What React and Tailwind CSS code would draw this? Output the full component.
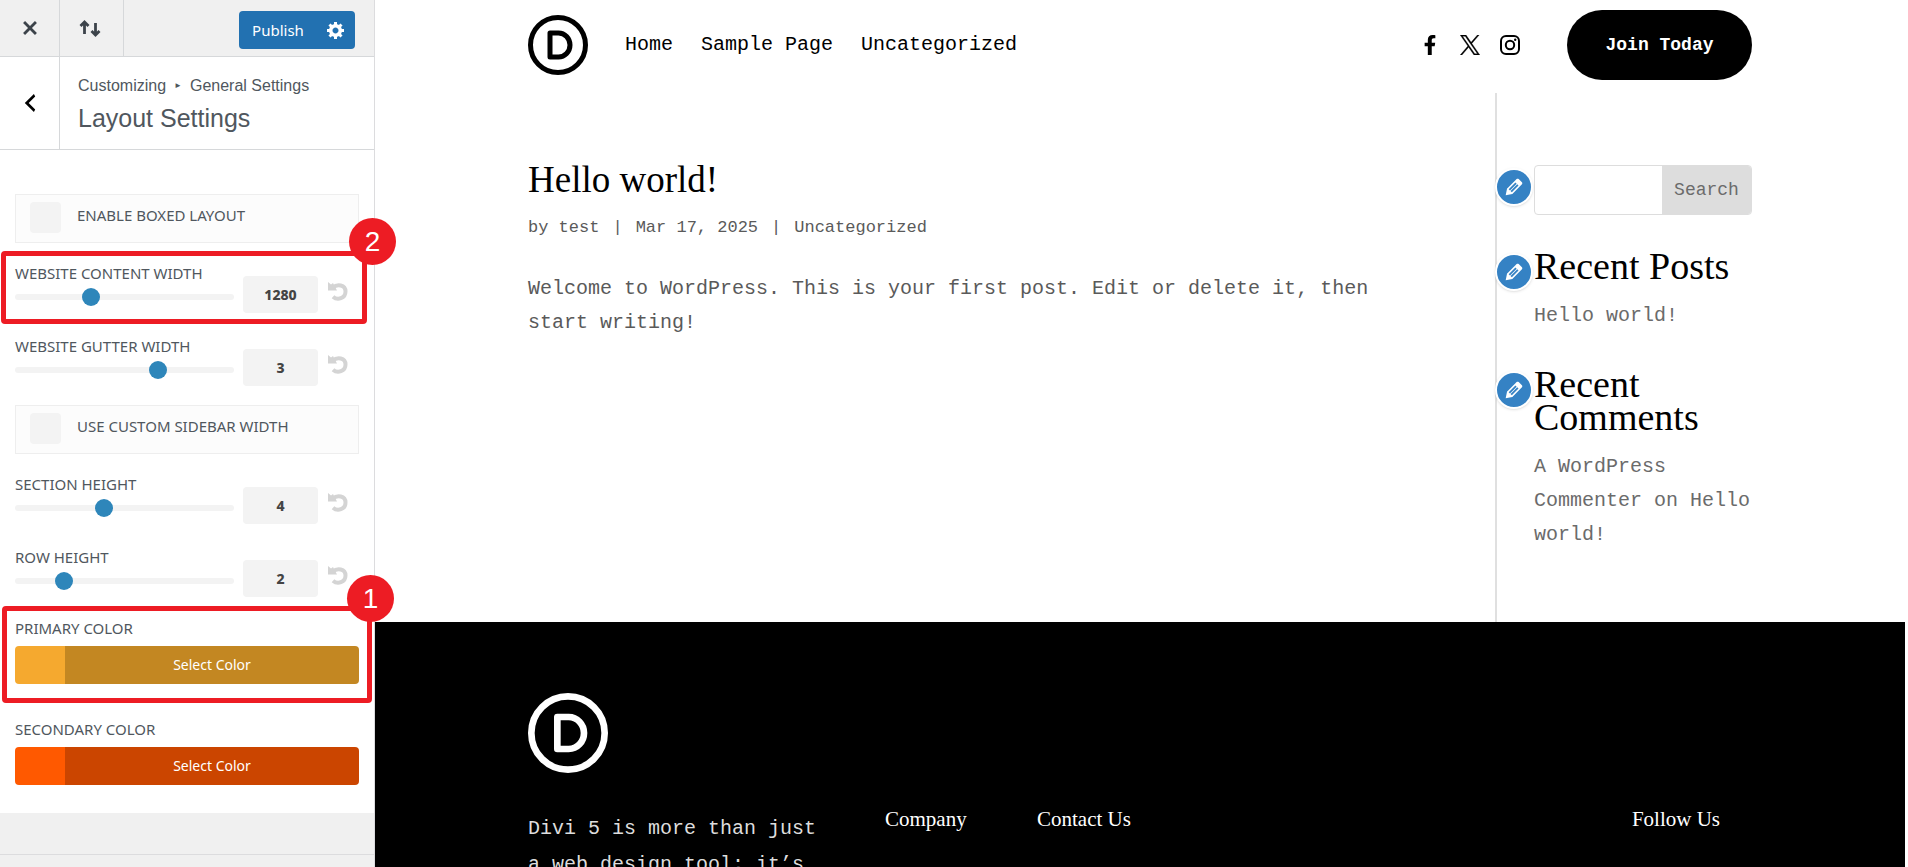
import { useState } from 'react'
import { FaFacebookF } from 'react-icons/fa'

const FORM_FONT = "font-['Noto_Sans','Open_Sans',sans-serif]"
const MONO_FONT = "font-['Liberation_Mono',monospace]"
const SERIF_FONT = "font-['Liberation_Serif',serif]"

function Dashicon({ d, className }) {
  return (
    <svg viewBox="0 0 20 20" fill="currentColor" className={className} aria-hidden="true">
      <path d={d} />
    </svg>
  )
}

const ICONS = {
  close: 'M14.95 6.46L11.41 10l3.54 3.54-1.41 1.41L10 11.42l-3.53 3.53-1.42-1.42L8.58 10 5.05 6.47l1.42-1.42L10 8.58l3.54-3.53z',
  back: 'M14 5l-5 5 5 5-1 2-7-7 7-7z',
  gear: 'M18 12h-2.18c-.17.7-.44 1.35-.81 1.93l1.54 1.54-2.1 2.1-1.54-1.54c-.58.36-1.23.63-1.91.79V19H8v-2.18c-.68-.16-1.33-.43-1.91-.79l-1.54 1.54-2.12-2.12 1.54-1.54c-.36-.58-.63-1.23-.79-1.91H1V9.03h2.17c.16-.7.44-1.35.8-1.94L2.43 5.55l2.1-2.1 1.54 1.54c.58-.37 1.24-.64 1.93-.81V2h3v2.18c.68.16 1.33.43 1.91.79l1.54-1.54 2.12 2.12-1.54 1.54c.36.59.64 1.24.8 1.94H18V12zm-8.5 1.5c1.66 0 3-1.34 3-3s-1.34-3-3-3-3 1.34-3 3 1.34 3 3 3z',
  edit: 'M13.89 3.39l2.71 2.72c.46.46.42 1.24.03 1.64l-8.01 8.02-5.56 1.16 1.16-5.58s7.6-7.63 7.99-8.03c.39-.39 1.22-.39 1.68.07zm-2.73 2.79l-5.59 5.61 1.11 1.11 5.54-5.65zm-2.97 8.23l5.58-5.6-1.07-1.08-5.59 5.6z',
}

function SortIcon() {
  return (
    <svg viewBox="0 0 22 18" className="w-[22px] h-[18px] mr-[3px]" fill="none" stroke="currentColor" strokeWidth="2.8" aria-hidden="true">
      <path d="M5.5 15V3M1.5 7l4-4 4 4M16.5 4v12M12.5 12l4 4 4-4" />
    </svg>
  )
}

function ResetIcon() {
  return (
    <svg viewBox="0 0 20 19" className="w-5 h-[19px]" aria-hidden="true">
      <path d="M5 5.500C9 1.800 17.500 2.500 17.500 9.500c0 7-8 9.200-12.500 5.200" fill="none" stroke="currentColor" strokeWidth="4" />
      <path d="M0 0l3 2.500L5 1l4 7.500H0z" fill="currentColor" />
    </svg>
  )
}

function DiviLogo({ className }) {
  return (
    <svg viewBox="0 0 60 60" className={className} fill="none" stroke="currentColor" role="img" aria-label="Divi">
      <circle cx="30" cy="30" r="27.500" strokeWidth="5" />
      <path d="M22 18h8.500a11.500 12 0 0 1 0 24H22z" strokeWidth="5" strokeLinejoin="round" />
    </svg>
  )
}

function Badge({ className, children }) {
  return (
    <span className={`absolute z-20 flex items-center justify-center w-[47px] h-[47px] rounded-full bg-[#ed1c24] text-white text-[28px] leading-none font-['Liberation_Sans',sans-serif] ${className}`}>
      {children}
    </span>
  )
}

function CheckRow({ id, label }) {
  return (
    <div className="flex items-start h-[49px] pt-[7px] pl-[14px] border border-[#eeeeee] bg-[#fcfcfc]">
      <input id={id} type="checkbox" className="appearance-none w-[31px] h-[31px] rounded bg-[#f3f3f3] checked:bg-[#2e86ba]" />
      <label htmlFor={id} className="ml-4 mt-[3px] text-[15px] leading-5 uppercase">{label}</label>
    </div>
  )
}

function SliderRow({ id, label, min, max, initial, children }) {
  const [value, setValue] = useState(initial)

  return (
    <div className="relative flex">
      <div className="flex-1 flex flex-col pt-px">
        <label htmlFor={id} className="text-[15px] leading-5 uppercase">{label}</label>
        <input
          id={id}
          type="range"
          min={min}
          max={max}
          value={value}
          onChange={(e) => setValue(Number(e.target.value))}
          className="appearance-none w-full h-[18px] mt-[5px] bg-transparent [&::-webkit-slider-runnable-track]:h-[6px] [&::-webkit-slider-runnable-track]:rounded-full [&::-webkit-slider-runnable-track]:bg-[#f3f3f3] [&::-webkit-slider-thumb]:appearance-none [&::-webkit-slider-thumb]:-mt-[6px] [&::-webkit-slider-thumb]:w-[18px] [&::-webkit-slider-thumb]:h-[18px] [&::-webkit-slider-thumb]:rounded-full [&::-webkit-slider-thumb]:bg-[#2e86ba]"
        />
      </div>
      <input
        type="text"
        aria-label={`${label} value`}
        value={value}
        onChange={(e) => setValue(Number(e.target.value) || 0)}
        className="w-[75px] h-[37px] ml-[9px] mt-[14px] rounded bg-[#f3f3f3] text-center text-sm font-extrabold text-[#444444]"
      />
      <button type="button" aria-label={`Reset ${label}`} onClick={() => setValue(initial)} className="ml-[10px] mr-[11px] mt-[20px] self-start text-[#d4d4d4]">
        <ResetIcon />
      </button>
      {children}
    </div>
  )
}

function ColorRow({ label, swatch, bar, children }) {
  return (
    <div className="relative">
      <div className="text-[15px] leading-5 uppercase pt-[2px]">{label}</div>
      <button type="button" aria-label={`${label}: Select Color`} className="flex w-full h-[38px] mt-2 rounded overflow-hidden text-sm text-white">
        <span className={`w-[50px] h-full ${swatch}`} />
        <span className={`flex-1 h-full flex items-center justify-center ${bar}`}>Select Color</span>
      </button>
      {children}
    </div>
  )
}

function Customizer() {
  return (
    <aside className={`relative z-10 flex flex-col w-[375px] shrink-0 border-r border-[#dcdcde] bg-[#f0f0f0] text-[#50575e] ${FORM_FONT}`}>
      <div className="flex h-[57px] shrink-0 border-b border-[#d6d8da]">
        <button type="button" aria-label="Close" className="flex items-center justify-center w-[60px] border-r border-[#d6d8da] text-[#3c434a]">
          <Dashicon d={ICONS.close} className="w-7 h-7" />
        </button>
        <button type="button" aria-label="Reorder" className="flex items-center justify-center w-16 border-r border-[#d6d8da] text-[#3c434a]">
          <SortIcon />
        </button>
        <div className="flex ml-auto mr-[19px] mt-[11px] h-[38px] rounded overflow-hidden bg-[#2271b1] text-white">
          <button type="button" className="w-[78px] text-[15px]">Publish</button>
          <button type="button" aria-label="Publish settings" className="flex items-center justify-center w-[38px]">
            <Dashicon d={ICONS.gear} className="w-5 h-5" />
          </button>
        </div>
      </div>

      <div className="flex h-[93px] shrink-0 border-b border-[#d6d8da] bg-white font-['Liberation_Sans',sans-serif]">
        <button type="button" aria-label="Back" className="flex items-center justify-center w-[60px] shrink-0 border-r border-[#d6d8da] text-black">
          <Dashicon d={ICONS.back} className="w-[26px] h-[26px]" />
        </button>
        <div className="pl-[18px] pt-[19px]">
          <div className="flex items-center text-base leading-5">
            <span>Customizing</span>
            <span className="mx-2 text-[8px]">►</span>
            <span>General Settings</span>
          </div>
          <h3 className="mt-[6px] text-[25px] leading-8">Layout Settings</h3>
        </div>
      </div>

      <form className="flex flex-col gap-[19px] pl-[15px] pr-[15px] pt-11 pb-7 bg-white">
        <CheckRow id="boxed" label="Enable Boxed Layout" />
        <div className="flex flex-col gap-[22px]">
          <SliderRow id="content-width" label="Website Content Width" min={960} max={1920} initial={1280}>
            <div className="absolute -left-[14px] -right-[8px] -top-[11px] -bottom-[11px] rounded border-5 border-[#ed1c24] pointer-events-none" />
            <Badge className="-right-[37px] -top-[44px]">2</Badge>
          </SliderRow>
          <SliderRow id="gutter-width" label="Website Gutter Width" min={1} max={4} initial={3} />
        </div>
        <CheckRow id="custom-sidebar" label="Use Custom Sidebar Width" />
        <div className="flex flex-col gap-[22px]">
          <SliderRow id="section-height" label="Section Height" min={0} max={10} initial={4} />
          <SliderRow id="row-height" label="Row Height" min={0} max={10} initial={2} />
        </div>
        <ColorRow label="Primary Color" swatch="bg-[#f5a92f]" bar="bg-[#c38722]">
          <div className="absolute -left-[13px] -right-[13px] -top-[10px] -bottom-[19px] rounded border-5 border-[#ed1c24] pointer-events-none" />
          <Badge className="-right-[35px] -top-[41px]">1</Badge>
        </ColorRow>
        <div className="mt-[14px]">
          <ColorRow label="Secondary Color" swatch="bg-[#ff5900]" bar="bg-[#cb4500]" />
        </div>
      </form>
      <div className="mt-auto h-[13px] shrink-0 border-t border-[#dcdcde]" />
    </aside>
  )
}

function SiteHeader() {
  return (
    <header className="flex items-center w-4/5 mx-auto h-[90px] shrink-0 text-black">
      <a href="#home" aria-label="Home">
        <DiviLogo className="w-[60px] h-[60px]" />
      </a>
      <nav className="flex gap-7 ml-[37px] text-xl">
        <a href="#home">Home</a>
        <a href="#sample">Sample Page</a>
        <a href="#uncategorized">Uncategorized</a>
      </nav>
      <div className="flex items-center gap-5 ml-auto mr-[47px]">
        <a href="#facebook" aria-label="Facebook"><FaFacebookF className="w-5 h-5" /></a>
        <a href="#x" aria-label="X">
          <svg viewBox="0 0 24 24" className="w-5 h-5" fill="currentColor" stroke="currentColor" strokeWidth="0.4">
            <path d="M14.234 10.162 22.977 0h-2.072l-7.591 8.824L7.251 0H.258l9.168 13.343L.258 24H2.330l8.016-9.318L16.749 24h6.993zm-2.837 3.299-.929-1.329L3.076 1.560h3.182l5.965 8.532.929 1.329 7.754 11.090h-3.182z" />
          </svg>
        </a>
        <a href="#instagram" aria-label="Instagram">
          <svg viewBox="0 0 20 20" className="w-5 h-5" fill="none" stroke="currentColor" strokeWidth="2">
            <rect x="1" y="1" width="18" height="18" rx="5" />
            <circle cx="10" cy="10" r="4.200" />
            <circle cx="15.200" cy="4.800" r="1.200" fill="currentColor" stroke="none" />
          </svg>
        </a>
      </div>
      <button type="button" className="w-[185px] h-[70px] rounded-full bg-black text-white text-lg font-bold">Join Today</button>
    </header>
  )
}

function Widget({ title, children }) {
  return (
    <section className="relative">
      <button type="button" aria-label="Edit widget" className="absolute -left-[39px] top-[3px] flex items-center justify-center w-[38px] h-[38px] rounded-full border-2 border-white bg-[#3582c4] text-white shadow">
        <Dashicon d={ICONS.edit} className="w-6 h-6 shrink-0" />
      </button>
      {title && <h4 className={`mb-4 text-[38px] leading-[33px] text-black ${SERIF_FONT}`}>{title}</h4>}
      {children}
    </section>
  )
}

function Preview() {
  return (
    <main className={`flex-1 flex flex-col mr-[3px] overflow-hidden bg-white ${MONO_FONT}`}>
      <SiteHeader />
      <div className="flex w-4/5 mx-auto mt-[3px] shrink-0">
        <article className="flex-1 pt-[68px] pr-[100px] border-r-2 border-[#e0e0e0] text-[#5a5a5a]">
          <h2 className={`text-[37px] leading-[37px] text-black ${SERIF_FONT}`}>Hello world!</h2>
          <p className="flex gap-[13px] mt-[15px] text-[17px] leading-[30px]">
            <span>by <a href="#author">test</a></span>
            <span>|</span>
            <span>Mar 17, 2025</span>
            <span>|</span>
            <a href="#uncategorized">Uncategorized</a>
          </p>
          <p className="mt-[29px] text-xl leading-[34px]">
            Welcome to WordPress. This is your first post. Edit or delete it, then start writing!
          </p>
        </article>
        <div className="flex flex-col gap-[35px] w-[255px] pl-[37px] pt-[72px] pb-[70px] text-[#6b6b6b] text-xl leading-[34px]">
          <Widget>
            <form className="flex h-[50px] rounded border border-[#dddddd] overflow-hidden">
              <input type="text" aria-label="Search" className="flex-1 min-w-0 px-2" />
              <button type="button" className="w-[89px] bg-[#dddddd] text-lg">Search</button>
            </form>
          </Widget>
          <Widget title="Recent Posts">
            <a href="#hello">Hello world!</a>
          </Widget>
          <Widget title="Recent Comments">
            <a href="#commenter">A WordPress Commenter</a> on <a href="#hello">Hello world!</a>
          </Widget>
        </div>
      </div>
      <footer className="flex-1 bg-black text-white">
        <div className="w-4/5 mx-auto pt-[71px]">
          <DiviLogo className="w-20 h-20" />
          <div className="flex mt-9">
            <p className="w-[300px] mt-[2px] text-xl leading-9 text-[#dddddd]">
              Divi 5 is more than just a web design tool; it’s
            </p>
            <h5 className={`w-[152px] ml-[57px] text-[21px] leading-[21px] ${SERIF_FONT}`}>Company</h5>
            <h5 className={`text-[21px] leading-[21px] ${SERIF_FONT}`}>Contact Us</h5>
            <h5 className={`ml-auto mr-8 text-[21px] leading-[21px] ${SERIF_FONT}`}>Follow Us</h5>
          </div>
        </div>
      </footer>
    </main>
  )
}

export default function App() {
  return (
    <div className="flex h-screen overflow-hidden bg-white">
      <Customizer />
      <Preview />
    </div>
  )
}
